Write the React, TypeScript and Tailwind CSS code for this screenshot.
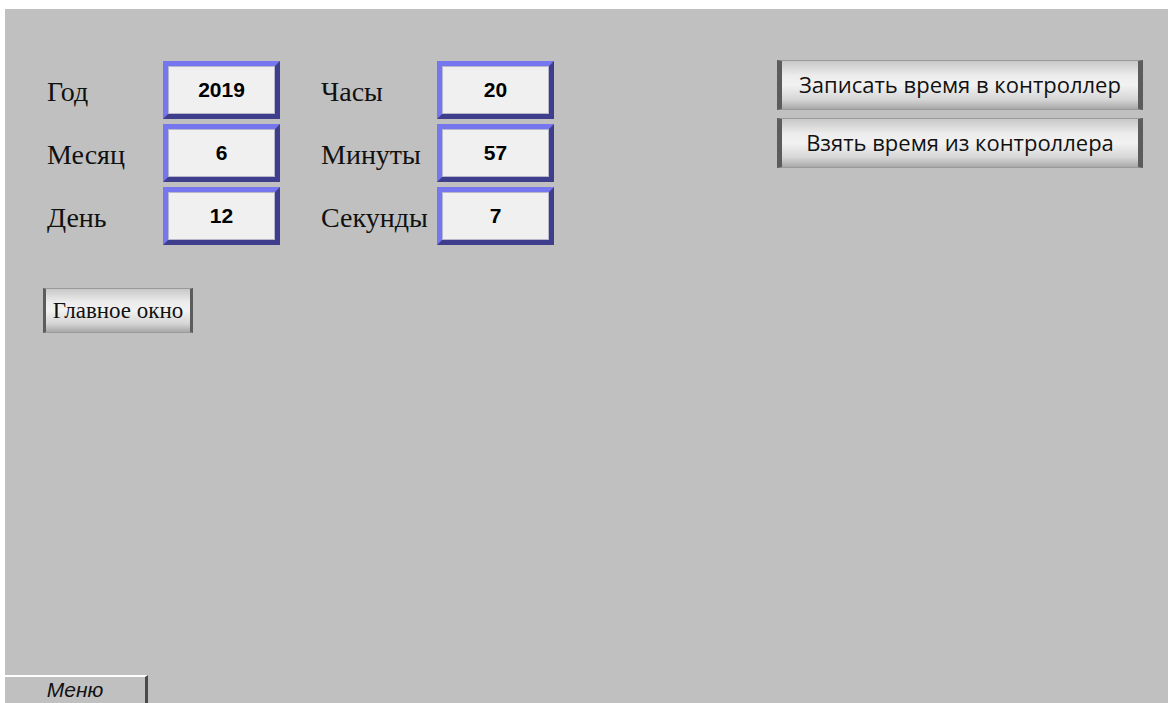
import React from "react"

type Field = { label: string; value: string }

const dateFields: Field[] = [
  { label: "Год", value: "2019" },
  { label: "Месяц", value: "6" },
  { label: "День", value: "12" },
]

const timeFields: Field[] = [
  { label: "Часы", value: "20" },
  { label: "Минуты", value: "57" },
  { label: "Секунды", value: "7" },
]

const serif = { fontFamily: '"Liberation Serif", "Times New Roman", serif' }

function ValueBox({ value }: { value: string }) {
  return (
    <div className="h-[58px] w-[117px] border-[5px] border-t-[#7676ee] border-l-[#7676ee] border-b-[#3e3e8c] border-r-[#3e3e8c]">
      <div className="flex h-full w-full items-center justify-center border border-[#b8b8cc] bg-[#f0f0f0] font-['Liberation_Sans',Arial,sans-serif] text-[21px] font-bold text-black">
        {value}
      </div>
    </div>
  )
}

function FieldColumn({ fields }: { fields: Field[] }) {
  return (
    <div className="flex flex-col gap-[5px]">
      {fields.map((f) => (
        <div key={f.label} className="flex items-center">
          <span className="w-[116px] pt-[4px] text-[28px] leading-none text-[#111]" style={serif}>
            {f.label}
          </span>
          <ValueBox value={f.value} />
        </div>
      ))}
    </div>
  )
}

function MetalButton({ children }: { children: React.ReactNode }) {
  return (
    <button className="flex h-[50px] w-[366px] items-center justify-center border-x-[5px] border-y border-x-[#5c5c5c] border-y-[#9a9a9a] bg-[linear-gradient(180deg,#c8c8c8_0%,#ececec_30%,#f2f2f2_50%,#d6d6d6_80%,#a8a8a8_100%)] pb-[2px] font-['Open_Sans',sans-serif] text-[22px] text-[#111]">
      {children}
    </button>
  )
}

export default function App() {
  return (
    <div className="h-[703px] w-[1168px] overflow-hidden bg-white pl-[5px] pt-[9px]">
      <div className="flex h-full flex-col bg-[#c0c0c0]">
        <div className="flex pt-[52px]">
          {/* date and time fields */}
          <div className="pl-[42px]">
            <div className="flex gap-[41px]">
              <FieldColumn fields={dateFields} />
              <FieldColumn fields={timeFields} />
            </div>
            <button
              className="-ml-[4px] mt-[43px] flex h-[45px] w-[150px] items-center justify-center border-x-[3px] border-y border-x-[#5c5c5c] border-y-[#9a9a9a] bg-[linear-gradient(180deg,#c8c8c8_0%,#ececec_30%,#f2f2f2_50%,#d6d6d6_80%,#a8a8a8_100%)] text-[23px] leading-none text-[#111]"
              style={serif}
            >
              Главное окно
            </button>
          </div>

          {/* controller clock actions */}
          <div className="ml-auto mr-[25px] -mt-[1px] flex flex-col gap-[8px]">
            <MetalButton>Записать время в контроллер</MetalButton>
            <MetalButton>Взять время из контроллера</MetalButton>
          </div>
        </div>

        <div className="mt-auto flex h-[28px] w-[143px] items-center justify-center border-t-2 border-r-[3px] border-t-white border-r-[#4a4a4a] font-['Liberation_Sans',Arial,sans-serif] text-[21px] italic text-[#111]">
          Меню
        </div>
      </div>
    </div>
  )
}
